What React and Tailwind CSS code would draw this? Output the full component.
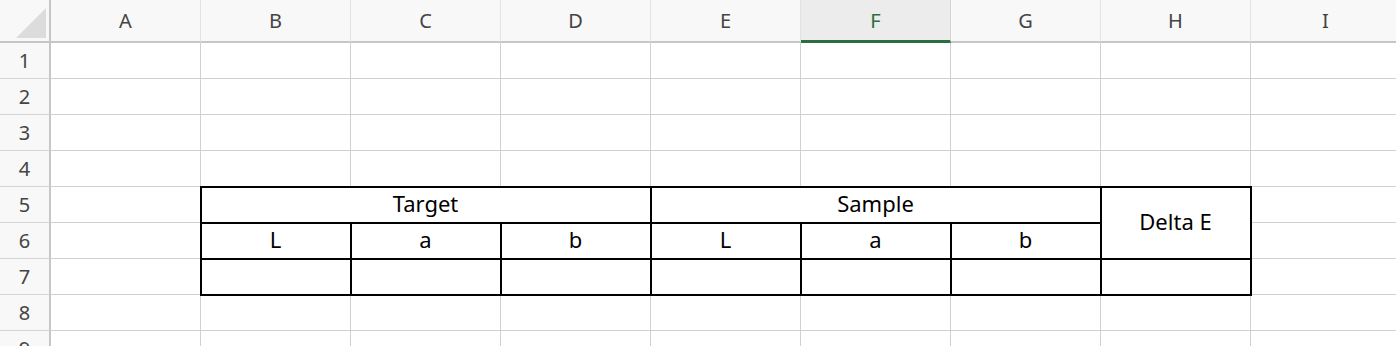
import React from "react";

const COLS = ["A", "B", "C", "D", "E", "F", "G", "H", "I"];
const FONT = { fontFamily: '"Noto Sans", "Open Sans", "Liberation Sans", sans-serif' };

function ColHeader({ label }) {
  const active = label === "F";
  return (
    <div
      className={
        active
          ? "flex items-center justify-center border-r border-r-[#d4d4d4] border-b-[3px] border-b-[#2b6e41] bg-[#ececec] pt-[1px] text-[20px] text-[#2b6e41]"
          : "flex items-center justify-center border-r border-r-[#e3e3e3] border-b-2 border-b-[#c6c6c6] bg-[#f8f8f8] pt-[1px] text-[20px] text-[#444444]"
      }
    >
      {label}
    </div>
  );
}

function RowHeader({ n }) {
  return (
    <div className="flex items-center justify-center border-r-2 border-r-[#c6c6c6] border-b border-b-[#d4d4d4] bg-[#f8f8f8] pt-[1px] text-[20px] text-[#444444]">
      {n}
    </div>
  );
}

function Cell({ children, boxed, span }) {
  const base = "flex items-center justify-center border-r border-b border-[#d0d0d0] bg-white pb-[3px] text-[22px] text-black";
  const box = boxed ? " relative z-10 outline-2 outline-black outline-offset-[-1px]" : "";
  const spans =
    span === "col3" ? " col-span-3" : span === "row2" ? " row-span-2" : "";
  return <div className={base + box + spans}>{children}</div>;
}

export default function App() {
  const plain = (r) => COLS.map((c) => <Cell key={c + r} />);

  return (
    <div className="h-[346px] w-[1396px] overflow-hidden bg-white" style={FONT}>
      <div className="grid grid-cols-[51px_repeat(9,150px)] grid-rows-[43px_repeat(9,36px)]">
        {/* corner with select-all triangle */}
        <div className="relative border-r-2 border-r-[#c6c6c6] border-b-2 border-b-[#c6c6c6] bg-[#f8f8f8]">
          <svg className="absolute left-[16px] top-[8px]" width="30" height="30" viewBox="0 0 30 30">
            <polygon points="30,0 30,30 0,30" fill="#dcdcdc" />
          </svg>
        </div>
        {COLS.map((c) => (
          <ColHeader key={c} label={c} />
        ))}

        {[1, 2, 3, 4].map((r) => (
          <React.Fragment key={r}>
            <RowHeader n={r} />
            {plain(r)}
          </React.Fragment>
        ))}

        {/* row 5 */}
        <RowHeader n={5} />
        <Cell />
        <Cell boxed span="col3">Target</Cell>
        <Cell boxed span="col3">Sample</Cell>
        <Cell boxed span="row2">Delta E</Cell>
        <Cell />

        {/* row 6 */}
        <RowHeader n={6} />
        <Cell />
        {["L", "a", "b", "L", "a", "b"].map((t, i) => (
          <Cell key={"h" + i} boxed>
            {t}
          </Cell>
        ))}
        <Cell />

        {/* row 7 */}
        <RowHeader n={7} />
        <Cell />
        {[0, 1, 2, 3, 4, 5, 6].map((i) => (
          <Cell key={"v" + i} boxed />
        ))}
        <Cell />

        {[8, 9].map((r) => (
          <React.Fragment key={r}>
            <RowHeader n={r} />
            {plain(r)}
          </React.Fragment>
        ))}
      </div>
    </div>
  );
}
